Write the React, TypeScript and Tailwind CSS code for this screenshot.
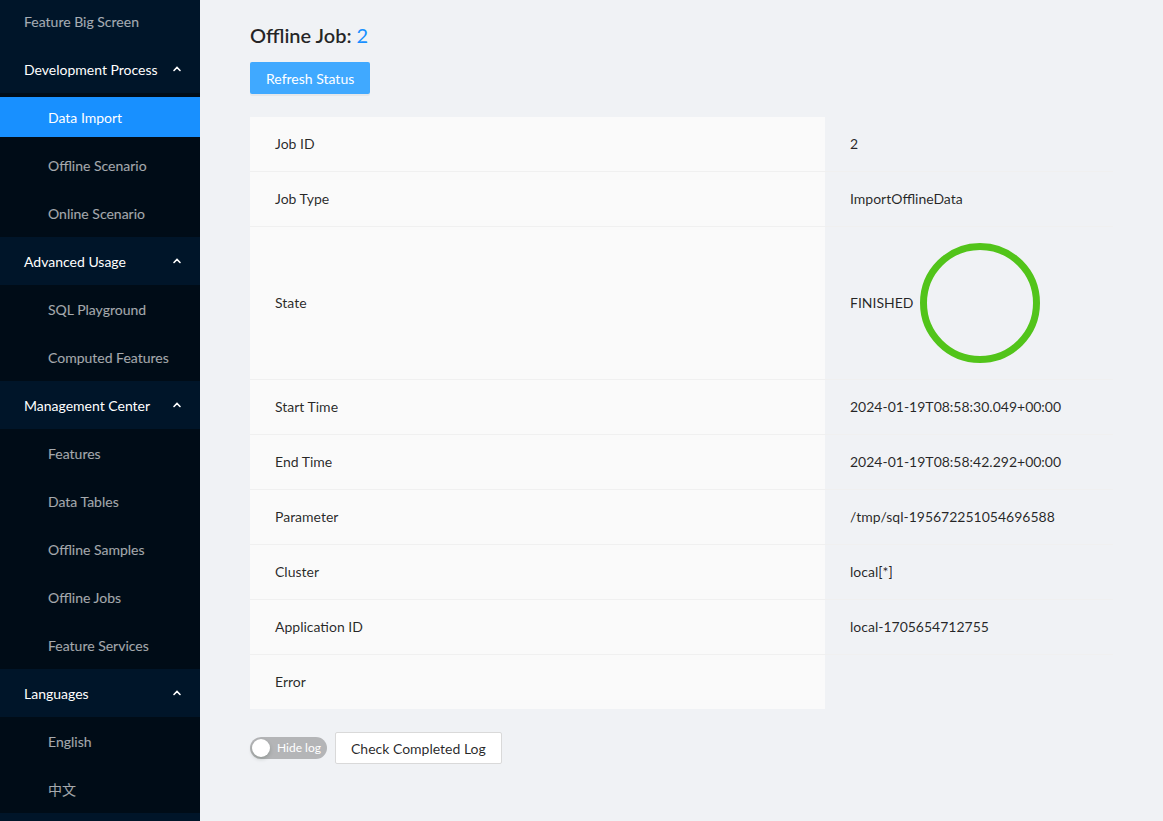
import type { ReactElement } from 'react';

/* Sidebar tree — groups open, one child selected. */
interface MenuGroup {
  title: string;
  items: string[];
}

const MENU_GROUPS: MenuGroup[] = [
  { title: 'Development Process', items: ['Data Import', 'Offline Scenario', 'Online Scenario'] },
  { title: 'Advanced Usage', items: ['SQL Playground', 'Computed Features'] },
  {
    title: 'Management Center',
    items: ['Features', 'Data Tables', 'Offline Samples', 'Offline Jobs', 'Feature Services'],
  },
  { title: 'Languages', items: ['English', '中文'] },
];

const SELECTED = 'Data Import';

const JOB_ROWS: [string, string][] = [
  ['Job ID', '2'],
  ['Job Type', 'ImportOfflineData'],
  ['State', 'FINISHED'],
  ['Start Time', '2024-01-19T08:58:30.049+00:00'],
  ['End Time', '2024-01-19T08:58:42.292+00:00'],
  ['Parameter', '/tmp/sql-195672251054696588'],
  ['Cluster', 'local[*]'],
  ['Application ID', 'local-1705654712755'],
  ['Error', ''],
];

function ChevronUp(): ReactElement {
  return (
    <svg width="10" height="10" viewBox="0 0 10 10" aria-hidden className="text-white">
      <path d="M2 6.5 L5 3.5 L8 6.5" fill="none" stroke="currentColor" strokeWidth="1.6" strokeLinecap="round" />
    </svg>
  );
}

function Sidebar(): ReactElement {
  return (
    <aside className="h-[821px] w-[200px] shrink-0 overflow-hidden bg-[#001529] text-[14px]">
      <div className="-mt-[3px]">
        <div className="py-1">
          <div className="flex h-10 items-center pl-6 text-white/65">Feature Big Screen</div>
        </div>
        {MENU_GROUPS.map((group) => (
          <div key={group.title}>
            <div className="py-1">
              <div className="flex h-10 items-center justify-between pl-6 pr-[18px] text-white">
                {group.title}
                <ChevronUp />
              </div>
            </div>
            <div className="bg-[#000c17]">
              {group.items.map((item) => (
                <div key={item} className="py-1">
                  <div
                    className={`flex h-10 items-center pl-12 ${
                      item === SELECTED ? 'bg-[#1890ff] text-white' : 'text-white/65'
                    }`}
                  >
                    {item}
                  </div>
                </div>
              ))}
            </div>
          </div>
        ))}
      </div>
    </aside>
  );
}

function StateCell({ value }: { value: string }): ReactElement {
  return (
    <div className="flex items-center gap-[7px]">
      <span>{value}</span>
      <svg width="120" height="120" viewBox="0 0 120 120" aria-hidden>
        <circle cx="60" cy="60" r="56.5" fill="none" stroke="#52c41a" strokeWidth="7" />
      </svg>
    </div>
  );
}

export default function App(): ReactElement {
  return (
    <div
      className="flex min-h-[821px] bg-[#f0f2f5] text-[14px] text-black/85"
      style={{ fontFamily: 'Lato, "Noto Sans CJK SC", sans-serif' }}
    >
      <Sidebar />
      <main className="flex-1 px-[50px] pt-[21px]">
        <h1 className="text-[20px] font-semibold leading-7 text-black/85">
          Offline Job: <span className="font-normal text-[#1890ff]">2</span>
        </h1>
        <button
          type="button"
          className="mt-[13px] h-8 rounded-[2px] bg-[#40a9ff] px-4 text-[14px] text-white shadow-[0_2px_0_rgba(0,0,0,0.045)]"
        >
          Refresh Status
        </button>
        <div className="mt-[23px] w-[863px]">
          {JOB_ROWS.map(([label, value], i) => (
            <div
              key={label}
              className={`flex ${i < JOB_ROWS.length - 1 ? 'border-b border-[#f0f0f0]' : ''}`}
            >
              <div className="flex w-[575px] shrink-0 items-center bg-[#fafafa] px-[25px] py-4 leading-[22px]">
                {label}
              </div>
              <div className="flex flex-1 items-center py-4 pl-[25px] pr-6 leading-[22px]">
                {label === 'State' ? <StateCell value={value} /> : value}
              </div>
            </div>
          ))}
        </div>
        <div className="mt-[23px] flex items-center gap-2">
          <div className="flex h-[22px] w-[77px] items-center rounded-full bg-black/25 pl-[2px]">
            <span className="h-[18px] w-[18px] rounded-full bg-white shadow-[0_2px_4px_rgba(0,35,11,0.2)]" />
            <span className="ml-[7px] text-[12px] text-white">Hide log</span>
          </div>
          <button
            type="button"
            className="h-8 rounded-[2px] border border-[#d9d9d9] bg-white px-[15px] text-[14px] text-black/85"
          >
            Check Completed Log
          </button>
        </div>
      </main>
    </div>
  );
}
